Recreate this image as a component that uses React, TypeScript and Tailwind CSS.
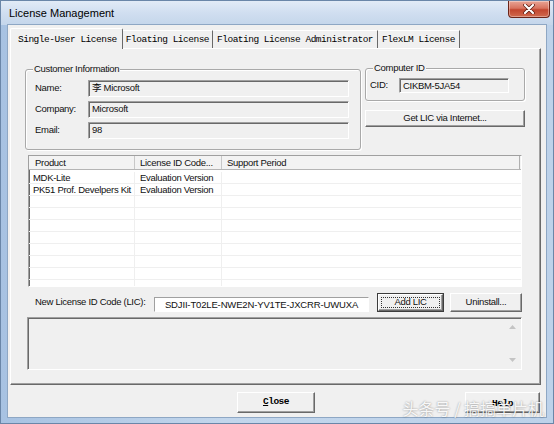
import React from "react";

const TABS = ["Single-User License", "Floating License", "Floating License Administrator", "FlexLM License"];

const ROWS = [
  ["MDK-Lite", "Evaluation Version", ""],
  ["PK51 Prof. Develpers Kit", "Evaluation Version", ""],
];

const raised =
  "border border-t-white border-l-white border-r-[#696969] border-b-[#696969] shadow-[inset_-1px_-1px_0_#a0a0a0] bg-[#f0f0f0]";
const sunken =
  "border border-t-[#a0a0a0] border-l-[#a0a0a0] border-r-white border-b-white shadow-[inset_1px_1px_0_#696969]";
const etched = "border border-[#a9a9a9] rounded-[3px] shadow-[inset_1px_1px_0_#fff,1px_1px_0_#fff]";

function Group({ title, className, children }: { title: string; className: string; children: React.ReactNode }) {
  return (
    <div className={`${etched} ${className}`}>
      <div className="-mt-[7px] ml-[7px] w-fit px-[1px] leading-[12px] bg-[#f0f0f0]">{title}</div>
      {children}
    </div>
  );
}

function Field({ value, className }: { value: string; className: string }) {
  return (
    <div className={`${sunken} bg-[#f0f0f0] pl-[3px] pt-[1px] leading-[12px] ${className}`}>{value}</div>
  );
}

function Button({ children, className }: { children: React.ReactNode; className: string }) {
  return <div className={`${raised} flex items-center justify-center ${className}`}>{children}</div>;
}

export default function App() {
  return (
    <div className="w-[554px] h-[424px] flex flex-col border border-[#6a86a8] bg-[linear-gradient(90deg,#a7c2e2,#c2d6ec_40%,#bdd2ea)] font-['Liberation_Sans',Arial,sans-serif] text-[9.5px] tracking-[-0.3px] text-[#111] overflow-hidden">
      {/* Title bar */}
      <div className="h-[24px] flex justify-between bg-[linear-gradient(180deg,#e2ebf6_0%,#d0def0_50%,#c4d6eb_100%)]">
        <span className="pl-[8px] self-center text-[11px] tracking-normal text-black">License Management</span>
        <div className="mr-[3px] w-[42px] h-[17px] rounded-b-[4px] border border-[#6b2418] border-t-0 bg-[linear-gradient(180deg,#e8a596_0%,#d8735f_45%,#c2462f_55%,#d06a4e_100%)] flex items-center justify-center shadow-[inset_0_0_0_1px_rgba(255,255,255,0.35)]">
          <svg width="12" height="10" viewBox="0 0 12 10">
            <path d="M2 1 L10 9 M10 1 L2 9" stroke="#5a1a10" strokeWidth="3.6" strokeLinecap="round" />
            <path d="M2 1 L10 9 M10 1 L2 9" stroke="#fff" strokeWidth="2.2" strokeLinecap="round" />
          </svg>
        </div>
      </div>

      <div className="flex h-[392px]">
        <div className="w-[7px]" />
        {/* Client area */}
        <div className="relative w-[538px] bg-[#f0f0f0] shadow-[0_0_0_1px_#8ea7c4] flex flex-col">
          {/* Tabs */}
          <div className="flex items-end h-[20px] mt-[3px] ml-[2px] font-['Liberation_Mono',monospace] text-[9.5px] tracking-[-0.5px] text-black">
            {TABS.map((t, i) =>
              i === 0 ? (
                <div
                  key={t}
                  className="relative z-10 h-[21px] -mb-[1px] pl-[7px] pr-[5px] pt-[2px] flex items-center bg-[#f0f0f0] border-t border-l border-r border-t-white border-l-white border-r-[#696969] rounded-t-[2px]"
                >
                  {t}
                </div>
              ) : (
                <div
                  key={t}
                  className={`h-[18px] pt-[1px] flex items-center border-t border-r border-t-white border-r-[#696969] ${
                    i === 1 ? "pl-[3px] pr-[3px]" : "pl-[4px] pr-[4px]"
                  }`}
                >
                  {t}
                </div>
              )
            )}
          </div>

          {/* Tab panel */}
          <div className="ml-[2px] w-[531px] h-[337px] border border-t-white border-l-white border-r-[#696969] border-b-[#696969] shadow-[inset_-1px_-1px_0_#a0a0a0] pt-[19px] pl-[14px] flex flex-col">
            <div className="flex items-start">
              <Group title="Customer Information" className="mt-[1px] w-[336px] h-[81px]">
                <div className="mt-[5px] flex flex-col gap-[4px]">
                  {[
                    ["Name:", "李 Microsoft"],
                    ["Company:", "Microsoft"],
                    ["Email:", "98"],
                  ].map(([l, v]) => (
                    <div key={l} className="flex items-center h-[17px]">
                      <span className="w-[62px] pl-[9px]">{l}</span>
                      <Field
                        value={v}
                        className="w-[261px] h-[17px] font-['Liberation_Sans','Noto_Sans_CJK_SC',sans-serif]"
                      />
                    </div>
                  ))}
                </div>
              </Group>

              <div className="ml-[4px] w-[160px] flex flex-col">
                <Group title="Computer ID" className="w-[160px] h-[33px]">
                  <div className="mt-[4px] flex items-center">
                    <span className="w-[33px] pl-[4px]">CID:</span>
                    <Field value="CIKBM-5JA54" className="w-[110px] h-[15px] leading-[11px]" />
                  </div>
                </Group>
                <Button className="mt-[9px] w-[160px] h-[17px]">Get LIC via Internet...</Button>
              </div>
            </div>

            {/* License list */}
            <div className={`ml-[3px] mt-[5px] w-[494px] h-[132px] bg-white ${sunken} overflow-hidden flex flex-col`}>
              <div className="flex h-[14px] shrink-0 bg-[#f3f3f3] border-b border-b-[#b5b5b5] leading-[13px]">
                <div className="w-[106px] pl-[6px] border-r border-r-[#c8c8c8]">Product</div>
                <div className="w-[87px] pl-[5px] border-r border-r-[#c8c8c8]">License ID Code...</div>
                <div className="w-[298px] pl-[5px] border-r border-r-[#b0b0b0]">Support Period</div>
              </div>
              <div className="pt-[2px] flex flex-col">
                {Array.from({ length: 10 }).map((_, r) => {
                  const row = ROWS[r] ?? ["", "", ""];
                  return (
                    <div key={r} className="flex h-[12px] shrink-0 border-b border-b-[#efefef] leading-[11px]">
                      <div className="w-[106px] pl-[4px] border-r border-r-[#efefef]">{row[0]}</div>
                      <div className="w-[87px] pl-[5px] border-r border-r-[#efefef]">{row[1]}</div>
                      <div className="w-[298px]">{row[2]}</div>
                    </div>
                  );
                })}
              </div>
            </div>

            {/* LIC row */}
            <div className="ml-[3px] mt-[6px] h-[19px] flex items-end">
              <span className="ml-[7px] w-[119px] self-center">New License ID Code (LIC):</span>
              <div className={`${sunken} shadow-none border-t-[#7a7a7a] border-l-[#7a7a7a] bg-white w-[215px] h-[15px] text-center leading-[13px] tracking-[-0.15px]`}>
                SDJII-T02LE-NWE2N-YV1TE-JXCRR-UWUXA
              </div>
              <div className="ml-[8px] w-[67px] h-[19px] border border-[#3c3c3c] flex">
                <div className={`${raised} flex-1 p-[2px] flex`}>
                  <div className="flex-1 border border-dotted border-[#333] flex items-center justify-center">Add LIC</div>
                </div>
              </div>
              <Button className="ml-[6px] w-[72px] h-[19px]">Uninstall...</Button>
            </div>

            {/* Message box */}
            <div className={`ml-[2px] mt-[5px] w-[495px] h-[53px] bg-[#f0f0f0] ${sunken} flex justify-end`}>
              <div className="w-[17px] flex flex-col justify-between py-[7px] items-center">
                <svg width="7" height="4" viewBox="0 0 7 4">
                  <path d="M0 4 L3.5 0 L7 4 Z" fill="#c4c4c4" />
                </svg>
                <svg width="7" height="4" viewBox="0 0 7 4">
                  <path d="M0 0 L7 0 L3.5 4 Z" fill="#c4c4c4" />
                </svg>
              </div>
            </div>
          </div>

          {/* Bottom buttons */}
          <div className="mt-[7px] flex font-['Liberation_Mono',monospace] font-bold text-[9.5px] tracking-[-0.5px] text-black">
            <Button className="ml-[229px] w-[78px] h-[21px]">
              <span>
                <span className="underline">C</span>lose
              </span>
            </Button>
            <Button className="ml-[150px] w-[75px] h-[21px] items-start pt-[4px]">Help</Button>
          </div>

          {/* Watermark */}
          <div className="absolute right-[2px] bottom-[-3px] text-[16px] tracking-normal text-white/90 font-['Noto_Sans_CJK_SC',sans-serif] [text-shadow:0_0_2px_rgba(0,0,0,0.45)]">
            头条号 / 搞搞单片机
          </div>
        </div>
        <div className="w-[7px]" />
      </div>
    </div>
  );
}
